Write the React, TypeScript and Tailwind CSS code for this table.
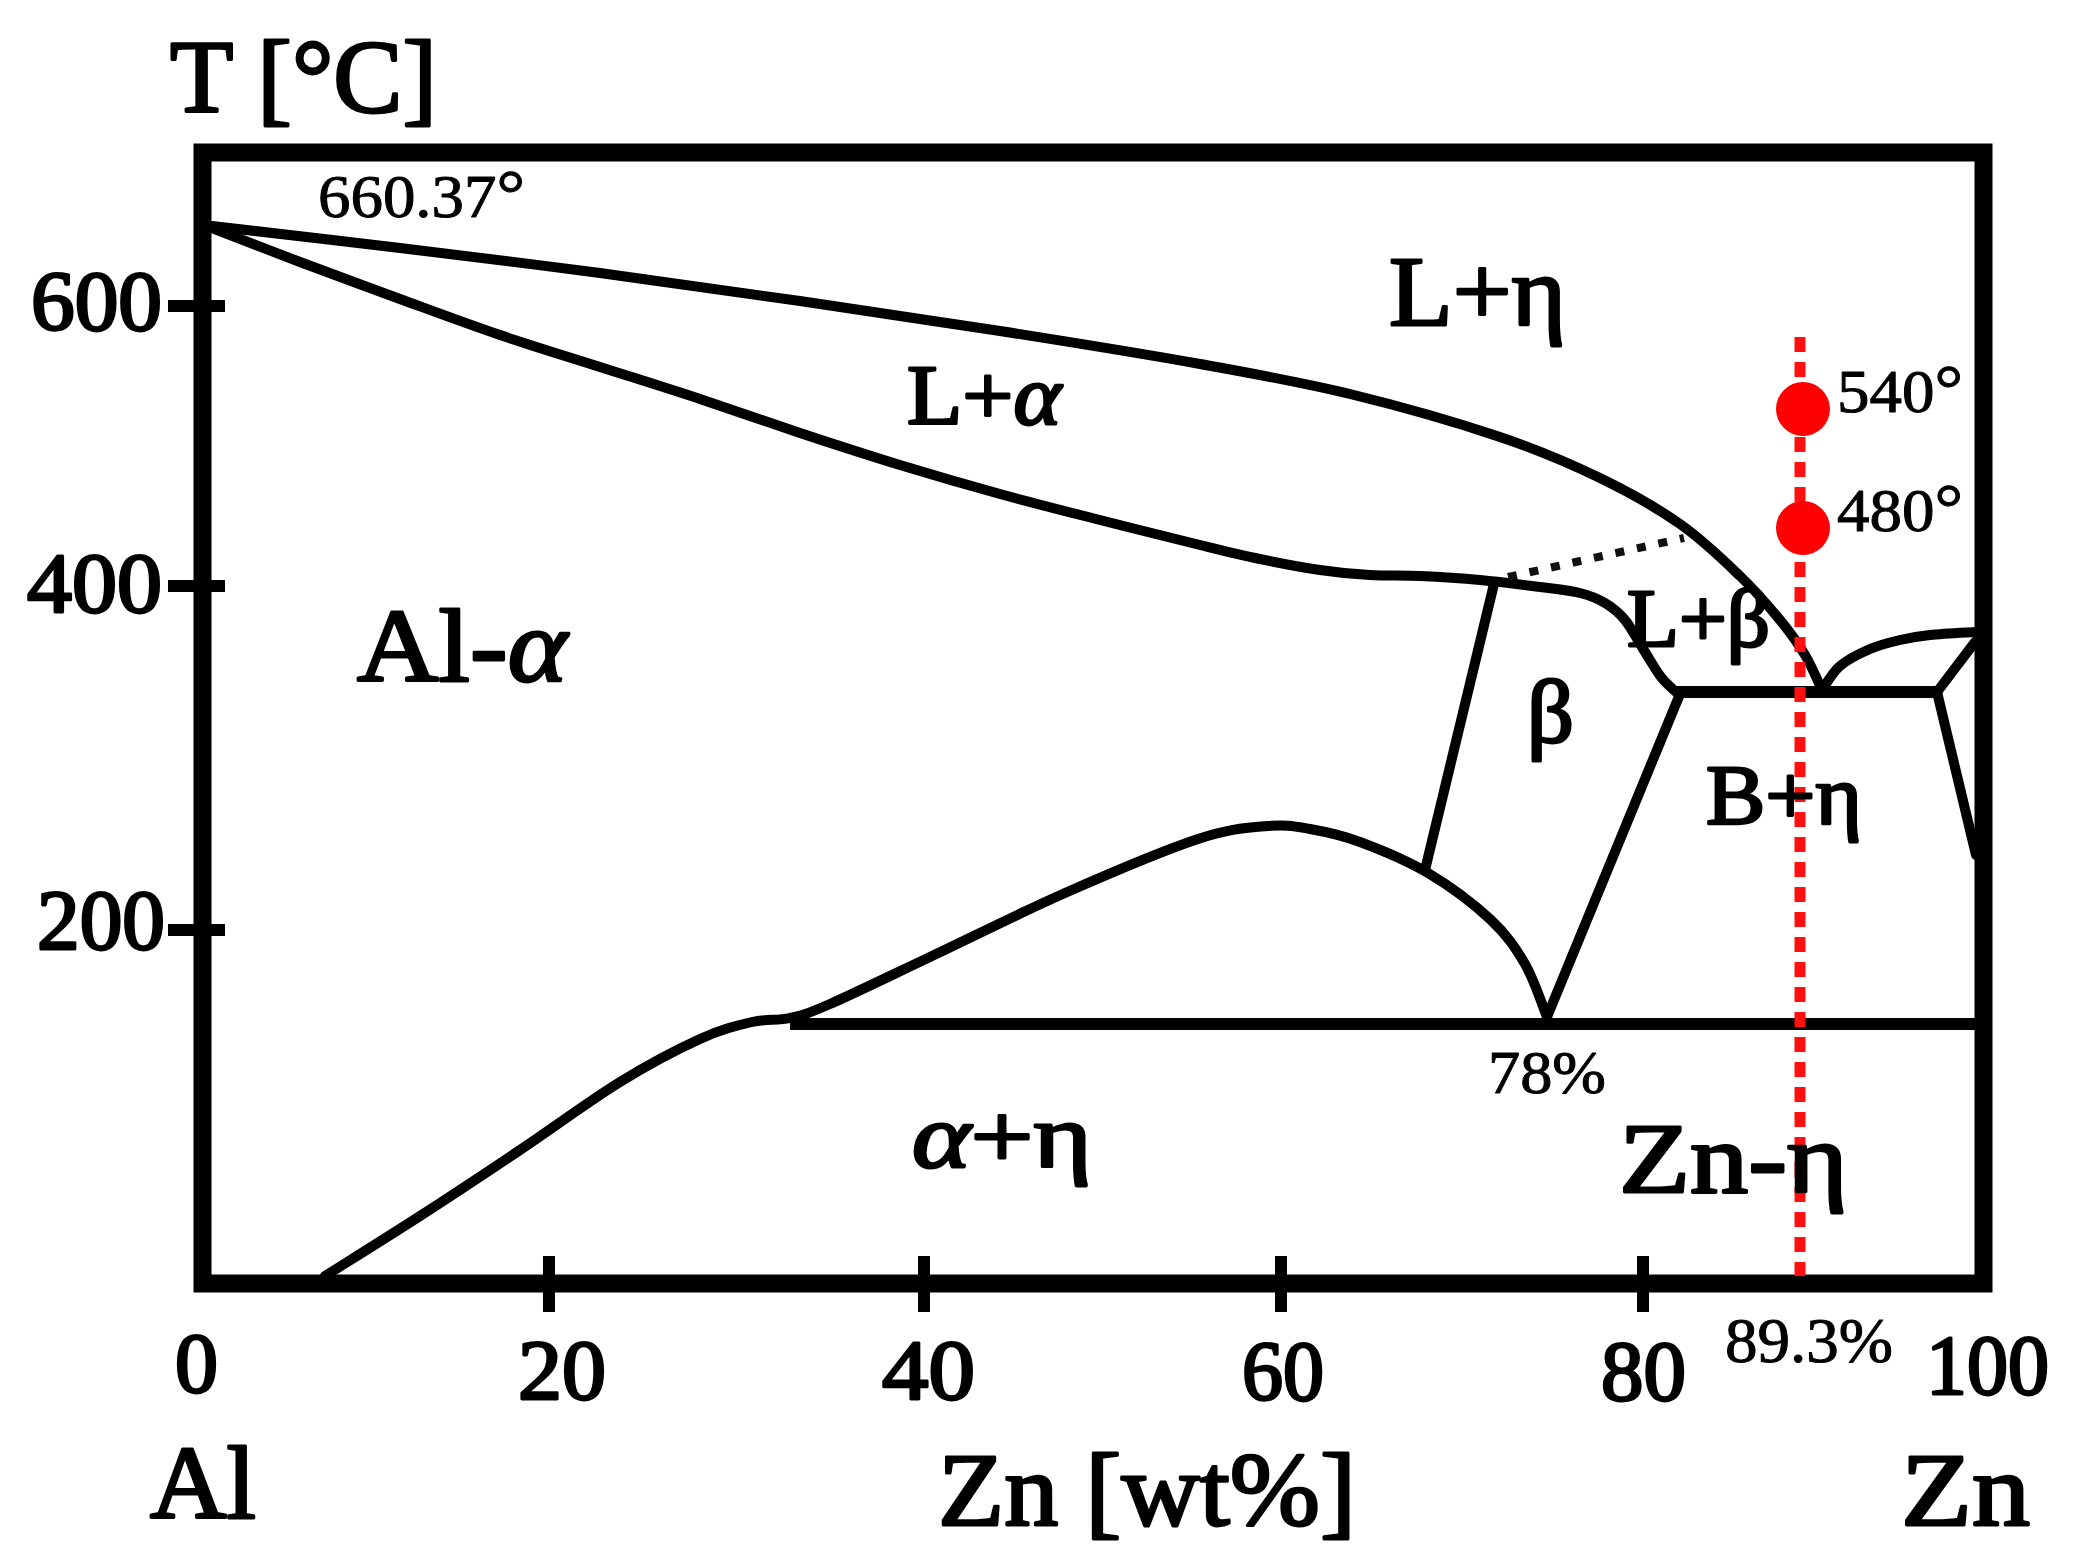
import React from 'react';

type Pt = [number, number];

// Catmull-Rom -> cubic bezier, for the hand-drawn phase boundaries
function smooth(pts: Pt[]) {
  let d = `M${pts[0][0]},${pts[0][1]}`;
  for (let i = 0; i < pts.length - 1; i++) {
    const p0 = pts[i - 1] ?? pts[i];
    const p1 = pts[i];
    const p2 = pts[i + 1];
    const p3 = pts[i + 2] ?? p2;
    const c1x = p1[0] + (p2[0] - p0[0]) / 6;
    const c1y = p1[1] + (p2[1] - p0[1]) / 6;
    const c2x = p2[0] - (p3[0] - p1[0]) / 6;
    const c2y = p2[1] - (p3[1] - p1[1]) / 6;
    d += ` C${c1x},${c1y} ${c2x},${c2y} ${p2[0]},${p2[1]}`;
  }
  return d;
}

const liquidus: Pt[] = [
  [212, 226], [400, 248], [600, 273], [800, 301], [1000, 331], [1200, 364],
  [1350, 394], [1500, 437], [1600, 478], [1680, 524], [1740, 576],
  [1780, 620], [1805, 655], [1822, 690],
];

const solidus: Pt[] = [
  [212, 228], [300, 262], [400, 299], [500, 335], [600, 367], [700, 399],
  [800, 433], [900, 465], [1000, 494], [1100, 520], [1200, 545],
  [1260, 559], [1320, 570], [1370, 575], [1420, 576], [1480, 580],
  [1540, 587], [1580, 593], [1605, 603], [1625, 620], [1645, 652],
  [1661, 677], [1676, 692],
];

const zincSide: Pt[] = [
  [1822, 690], [1840, 666], [1870, 649], [1900, 640], [1930, 635], [1976, 632],
];

const dome: Pt[] = [
  [325, 1276], [420, 1216], [520, 1150], [620, 1082], [700, 1039],
  [752, 1022], [790, 1018], [830, 1004], [930, 957], [1065, 893],
  [1198, 839], [1268, 826], [1310, 829], [1360, 842], [1428, 873],
  [1491, 920], [1525, 964], [1547, 1017],
];

const serif = "'Liberation Serif', 'Times New Roman', serif";

type Label = {
  t: React.ReactNode;
  k: string;
  x: number;
  y: number;
  w: number;
  s: number;
  big?: boolean;
};

const alpha = <tspan fontStyle="italic">α</tspan>;
const deg = <tspan fontSize="1.1em">°</tspan>;

const labels: Label[] = [
  { k: 't', t: 'T [°C]', x: 170, y: 112, w: 267, s: 104, big: true },
  { k: '660', t: <>660.37{deg}</>, x: 318, y: 217, w: 207, s: 62 },
  { k: '600', t: '600', x: 31, y: 330, w: 131, s: 84, big: true },
  { k: '400', t: '400', x: 27, y: 612, w: 135, s: 84, big: true },
  { k: '200', t: '200', x: 37, y: 949, w: 128, s: 84, big: true },
  { k: 'le', t: 'L+η', x: 1389, y: 325, w: 177, s: 100, big: true },
  { k: 'la', t: <>L+{alpha}</>, x: 907, y: 424, w: 154, s: 85, big: true },
  { k: 'ala', t: <>Al-{alpha}</>, x: 357, y: 681, w: 210, s: 104, big: true },
  { k: 'lb', t: 'L+β', x: 1627, y: 646, w: 143, s: 82, big: true },
  { k: 'b', t: 'β', x: 1527, y: 742, w: 47, s: 88, big: true },
  { k: 'be', t: 'B+η', x: 1706, y: 824, w: 156, s: 85, big: true },
  { k: '540', t: <>540{deg}</>, x: 1837, y: 412, w: 126, s: 62 },
  { k: '480', t: <>480{deg}</>, x: 1837, y: 531, w: 126, s: 62 },
  { k: '78', t: '78%', x: 1488, y: 1093, w: 118, s: 62 },
  { k: 'ae', t: <>{alpha}+η</>, x: 912, y: 1167, w: 180, s: 92, big: true },
  { k: 'zne', t: 'Zn-η', x: 1619, y: 1192, w: 229, s: 100, big: true },
  { k: 'x0', t: '0', x: 175, y: 1392, w: 43, s: 84, big: true },
  { k: 'x20', t: '20', x: 518, y: 1399, w: 88, s: 84, big: true },
  { k: 'x40', t: '40', x: 882, y: 1399, w: 93, s: 84, big: true },
  { k: 'x60', t: '60', x: 1242, y: 1400, w: 82, s: 84, big: true },
  { k: 'x80', t: '80', x: 1601, y: 1400, w: 85, s: 84, big: true },
  { k: 'x100', t: '100', x: 1926, y: 1394, w: 123, s: 84, big: true },
  { k: '893', t: '89.3%', x: 1725, y: 1362, w: 168, s: 64 },
  { k: 'al', t: 'Al', x: 150, y: 1518, w: 106, s: 104, big: true },
  { k: 'zn', t: 'Zn [wt%]', x: 938, y: 1525, w: 418, s: 104, big: true },
  { k: 'zn2', t: 'Zn', x: 1901, y: 1525, w: 129, s: 104, big: true },
];

export default function App() {
  return (
    <div className="w-[2076px] h-[1564px] bg-white overflow-hidden">
      <svg width={2076} height={1564} viewBox="0 0 2076 1564" className="block">
        {/* frame */}
        <rect x={202.5} y={152.5} width={1781} height={1131} fill="none" stroke="#000" strokeWidth={18} />

        {/* axis ticks */}
        {[306, 586, 930].map((y) => (
          <line key={y} x1={168} y1={y} x2={225} y2={y} stroke="#000" strokeWidth={12} />
        ))}
        {[549, 924, 1281, 1643].map((x) => (
          <line key={x} x1={x} y1={1256} x2={x} y2={1312} stroke="#000" strokeWidth={12} />
        ))}

        {/* phase boundaries */}
        <g fill="none" stroke="#000" strokeWidth={10} strokeLinejoin="round" strokeLinecap="round">
          <path d={smooth(liquidus)} />
          <path d={smooth(solidus)} />
          <path d={smooth(zincSide)} />
          <path d={smooth(dome)} />
          <line x1={1494} y1={584} x2={1425} y2={870} />
          <line x1={1680} y1={694} x2={1547} y2={1017} />
          <line x1={1975} y1={642} x2={1937} y2={692} />
          <line x1={1937} y1={692} x2={1976} y2={855} />
        </g>
        <line x1={1677} y1={692} x2={1937} y2={692} stroke="#000" strokeWidth={12} />
        <line x1={790} y1={1024} x2={1976} y2={1024} stroke="#000" strokeWidth={12} />
        <line
          x1={1508}
          y1={577}
          x2={1684}
          y2={538}
          stroke="#111"
          strokeWidth={8}
          strokeDasharray="9 13"
        />

        {/* 89.3% composition marker */}
        <line
          x1={1800}
          y1={337}
          x2={1800}
          y2={1276}
          stroke="#ff1010"
          strokeWidth={11}
          strokeDasharray="15 10"
        />
        <circle cx={1803} cy={409} r={27} fill="#ff0000" />
        <circle cx={1803} cy={528} r={27} fill="#ff0000" />

        {/* labels */}
        {labels.map((l) => (
          <text
            key={l.k}
            x={l.x}
            y={l.y}
            fontSize={l.s}
            fontFamily={serif}
            textLength={l.w}
            lengthAdjust="spacingAndGlyphs"
            fill="#000"
            stroke="#000"
            strokeWidth={l.big ? 2.8 : 1}
            strokeLinejoin="round"
          >
            {l.t}
          </text>
        ))}
      </svg>
    </div>
  );
}
